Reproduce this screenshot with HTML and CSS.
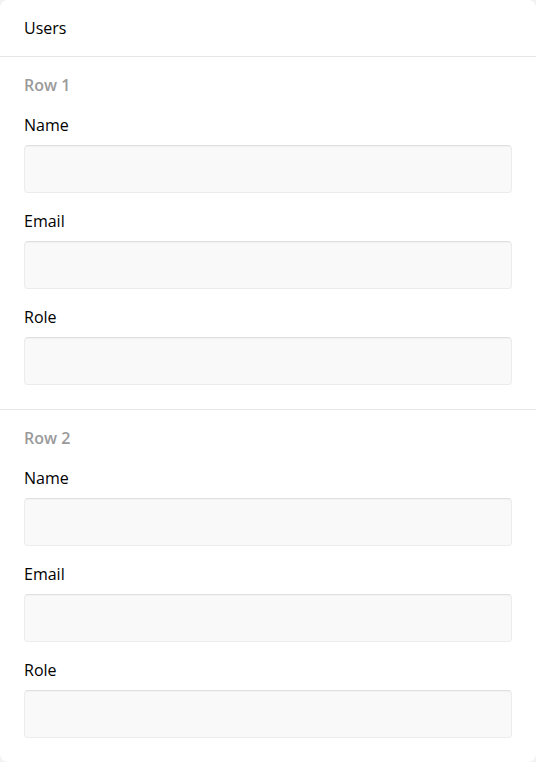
FILE: index.html
```html
<!DOCTYPE html>
<html>
<head>
<meta charset="utf-8">
<link rel="stylesheet" href="styles.css">
</head>
<body>
<div class="card">
  <div class="header">Users</div>
  <div class="section">
    <div class="row-title">Row 1</div>
    <div class="field"><label class="label">Name</label><input class="input" type="text"></div>
    <div class="field"><label class="label">Email</label><input class="input" type="text"></div>
    <div class="field"><label class="label">Role</label><input class="input" type="text"></div>
  </div>
  <div class="section">
    <div class="row-title">Row 2</div>
    <div class="field"><label class="label">Name</label><input class="input" type="text"></div>
    <div class="field"><label class="label">Email</label><input class="input" type="text"></div>
    <div class="field"><label class="label">Role</label><input class="input" type="text"></div>
  </div>
</div>
</body>
</html>
```
FILE: styles.css
```css
html, body {
  margin: 0;
  padding: 0;
  background: #f2f2f2;
}
body {
  font-family: "Open Sans", "Noto Sans", sans-serif;
  color: #000;
}
.card {
  background: #fff;
  border-radius: 8px;
  min-height: 762px;
  box-sizing: border-box;
}
.header {
  padding: 16px 24px;
  font-size: 16px;
  line-height: 24px;
  font-weight: 500;
  border-bottom: 1px solid #e6e6e6;
}
.section {
  padding: 16px 24px 24px;
  display: flex;
  flex-direction: column;
  gap: 16px;
}
.section + .section {
  border-top: 1px solid #e6e6e6;
}
.row-title {
  font-size: 16px;
  line-height: 24px;
  font-weight: 600;
  color: #9a9a9a;
}
.field {
  display: flex;
  flex-direction: column;
  gap: 8px;
}
.label {
  font-size: 16px;
  line-height: 24px;
  font-weight: 500;
}
.input {
  display: block;
  box-sizing: border-box;
  width: 100%;
  height: 48px;
  margin: 0;
  background: #f9f9f9;
  border: 1px solid #ececec;
  border-top-color: #e0e0e0;
  border-radius: 4px;
  box-shadow: inset 0 1px 1px rgba(0,0,0,0.03);
  outline: none;
}
```
